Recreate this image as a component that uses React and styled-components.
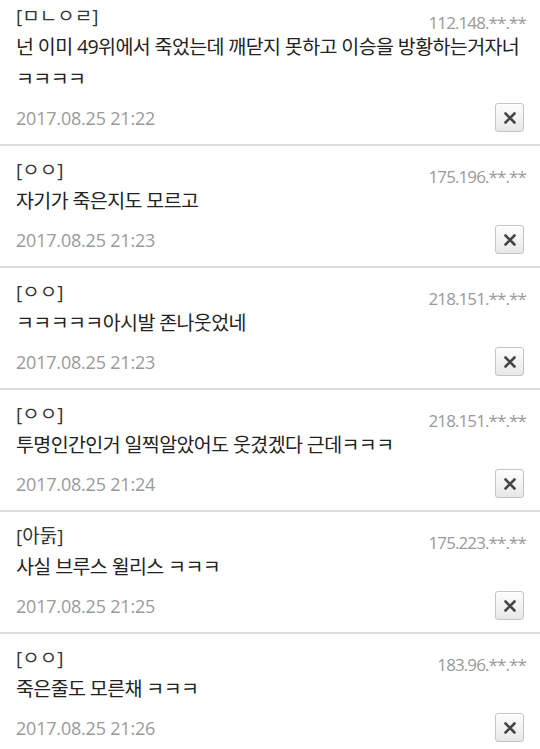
import React from "react";
import styled, { createGlobalStyle } from "styled-components";

const Global = createGlobalStyle`
  html, body { margin: 0; padding: 0; background: #fff; }
  body { font-family: "Open Sans", "Noto Sans CJK KR", sans-serif; overflow: hidden; }
`;

const List = styled.div`
  display: flex;
  flex-direction: column;
  width: 540px;
`;

const Row = styled.div`
  display: flex;
  flex-direction: column;
  padding: ${(p) => (p.$first ? "3px" : "11px")} 16px 12px 16px;
  border-bottom: 2px solid #dcdcdc;
`;

const Head = styled.div`
  display: flex;
  justify-content: space-between;
  align-items: flex-end;
  height: 28px;
`;

const Name = styled.span`
  font-size: 19px;
  line-height: 26px;
  color: #333;
  align-self: flex-start;
`;

const Ip = styled.span`
  font-size: 17px;
  line-height: 22px;
  color: #9a9a9a;
  letter-spacing: -0.9px;
  margin-right: -2px;
  transform: translateY(3px);
`;

const Body = styled.div`
  font-size: 19.5px;
  line-height: 32px;
  color: #222;
  letter-spacing: -0.6px;
  word-break: keep-all;
`;

const Foot = styled.div`
  display: flex;
  justify-content: space-between;
  align-items: center;
  margin-top: 8px;
  height: 29px;
`;

const Date = styled.span`
  font-size: 18px;
  color: #9a9a9a;
  letter-spacing: -0.2px;
`;

const DelButton = styled.button`
  width: 29px;
  height: 29px;
  padding: 0;
  margin: 0;
  display: flex;
  align-items: center;
  justify-content: center;
  border: 1px solid #c4c4c4;
  border-radius: 3px;
  background: linear-gradient(#fdfdfd, #e8e8e8);
  box-shadow: inset 0 1px 0 #fff;
  cursor: pointer;
`;

const comments = [
  {
    name: "[ㅁㄴㅇㄹ]",
    ip: "112.148.**.**",
    text: "넌 이미 49위에서 죽었는데 깨닫지 못하고 이승을 방황하는거자너 ㅋㅋㅋㅋ",
    date: "2017.08.25 21:22",
  },
  { name: "[ㅇㅇ]", ip: "175.196.**.**", text: "자기가 죽은지도 모르고", date: "2017.08.25 21:23" },
  { name: "[ㅇㅇ]", ip: "218.151.**.**", text: "ㅋㅋㅋㅋㅋ아시발 존나웃었네", date: "2017.08.25 21:23" },
  { name: "[ㅇㅇ]", ip: "218.151.**.**", text: "투명인간인거 일찍알았어도 웃겼겠다 근데ㅋㅋㅋ", date: "2017.08.25 21:24" },
  { name: "[아둙]", ip: "175.223.**.**", text: "사실 브루스 윌리스 ㅋㅋㅋ", date: "2017.08.25 21:25" },
  { name: "[ㅇㅇ]", ip: "183.96.**.**", text: "죽은줄도 모른채 ㅋㅋㅋ", date: "2017.08.25 21:26" },
];

const XIcon = () => (
  <svg width="14" height="14" viewBox="0 0 14 14">
    <path d="M2.5 2.5 L11.5 11.5 M11.5 2.5 L2.5 11.5" stroke="#454545" strokeWidth="2.6" strokeLinecap="round" />
  </svg>
);

export default function App() {
  return (
    <>
      <Global />
      <List>
        {comments.map((c, i) => (
          <Row key={i} $first={i === 0}>
            <Head>
              <Name>{c.name}</Name>
              <Ip>{c.ip}</Ip>
            </Head>
            <Body>{c.text}</Body>
            <Foot>
              <Date>{c.date}</Date>
              <DelButton aria-label="삭제">
                <XIcon />
              </DelButton>
            </Foot>
          </Row>
        ))}
      </List>
    </>
  );
}
